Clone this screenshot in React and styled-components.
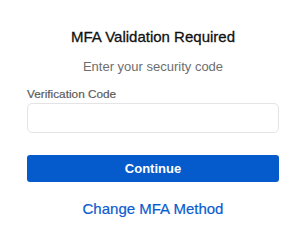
import React from "react";
import styled, { createGlobalStyle } from "styled-components";

const Global = createGlobalStyle`
  html, body { margin: 0; padding: 0; background: #ffffff; }
  body { font-family: "Liberation Sans", Arial, sans-serif; -webkit-font-smoothing: antialiased; }
  * { box-sizing: border-box; }
`;

const Card = styled.div`
  width: 308px;
  height: 245px;
  background: #fff;
  padding: 28px 29px 0 27px;
  display: flex;
  flex-direction: column;
  align-items: stretch;
`;

const Title = styled.h1`
  margin: 0;
  font-size: 15px;
  font-weight: 500;
  -webkit-text-stroke: 0.3px #111;
  color: #111;
  text-align: center;
  line-height: 18px;
`;

const Subtitle = styled.p`
  margin: 13px 0 0;
  font-size: 13px;
  color: #6e6e6e;
  text-align: center;
  line-height: 16px;
`;

const Label = styled.label`
  margin-top: 12px;
  font-size: 11.8px;
  -webkit-text-stroke: 0.2px #5a5a5a;
  color: #5a5a5a;
  line-height: 14px;
`;

const Input = styled.input`
  margin-top: 2px;
  height: 30px;
  width: 100%;
  border: 1px solid #e4e4e7;
  border-radius: 5px;
  background: #fff;
  padding: 0 8px;
  font-size: 14px;
  outline: none;
`;

const Button = styled.button`
  margin-top: 22px;
  height: 27px;
  width: 100%;
  border: none;
  border-radius: 3px;
  background: #055acc;
  color: #fff;
  font-family: inherit;
  font-size: 13px;
  font-weight: 700;
  cursor: pointer;
`;

const Link = styled.a`
  margin-top: 18px;
  align-self: center;
  font-size: 15px;
  -webkit-text-stroke: 0.2px #0b5bd0;
  color: #0b5bd0;
  text-decoration: none;
  line-height: 18px;
`;

export default function App() {
  return (
    <>
      <Global />
      <Card>
        <Title>MFA Validation Required</Title>
        <Subtitle>Enter your security code</Subtitle>
        <Label htmlFor="code">Verification Code</Label>
        <Input id="code" />
        <Button>Continue</Button>
        <Link href="#">Change MFA Method</Link>
      </Card>
    </>
  );
}
